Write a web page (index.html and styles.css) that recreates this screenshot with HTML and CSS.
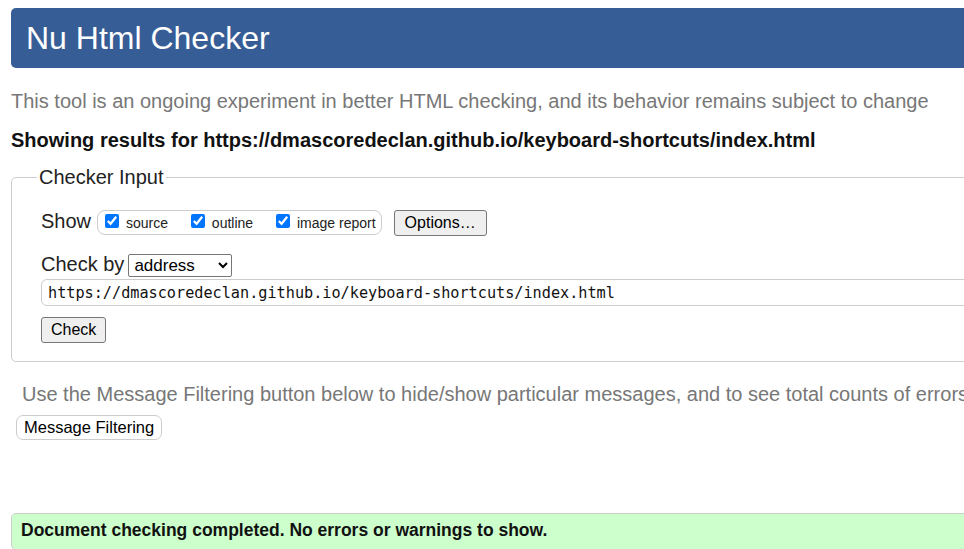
FILE: index.html
```html
<!DOCTYPE html>
<html lang="en">
<head>
<meta charset="utf-8">
<title>Nu Html Checker</title>
<link rel="stylesheet" href="styles.css">
</head>
<body>
<div class="page">
  <h1 class="title">Nu Html Checker</h1>
  <p class="intro">This tool is an ongoing experiment in better HTML checking, and its behavior remains subject to change</p>
  <p class="showing">Showing results for https://dmascoredeclan.github.io/keyboard-shortcuts/index.html</p>
  <fieldset class="checker">
    <legend class="legend">Checker Input</legend>
    <div class="row show-row">
      <span class="lbl">Show</span>
      <span class="group">
        <label class="opt"><input type="checkbox" checked> source</label>
        <label class="opt"><input type="checkbox" checked> outline</label>
        <label class="opt"><input type="checkbox" checked> image report</label>
      </span>
      <button class="btn options" type="button">Options…</button>
    </div>
    <div class="row by-row">
      <span class="lbl">Check by</span>
      <select class="sel"><option>address</option></select>
    </div>
    <input class="url" type="text" value="https://dmascoredeclan.github.io/keyboard-shortcuts/index.html">
    <div class="check-wrap"><button class="btn" type="button">Check</button></div>
  </fieldset>
  <p class="filter-note">Use the Message Filtering button below to hide/show particular messages, and to see total counts of errors and warnings.</p>
  <button class="filter-btn" type="button">Message Filtering</button>
  <div class="success">Document checking completed. No errors or warnings to show.</div>
</div>
</body>
</html>
```

FILE: styles.css
```css
html {
  overflow: hidden;
}
body {
  margin: 8px 0 0 11px;
  font-family: "Liberation Sans", Arial, sans-serif;
  color: #000;
  background: #fff;
}
.page {
  width: 1260px;
}
.title {
  margin: 0;
  height: 60px;
  line-height: 60px;
  padding-left: 15px;
  font-size: 32px;
  font-weight: normal;
  color: #fff;
  background: #365d95;
  border-radius: 5px 0 0 5px;
}
.intro {
  margin: 22px 0 0;
  font-size: 20px;
  line-height: 23px;
  color: #777;
  white-space: nowrap;
}
.showing {
  margin: 16px 0 0;
  font-size: 20px;
  line-height: 23px;
  font-weight: bold;
  color: #111;
  white-space: nowrap;
}
.checker {
  margin: 14px 0 0;
  padding: 0 0 18px 29px;
  border: 1px solid #ccc;
  border-radius: 5px;
  min-width: 0;
}
.legend {
  font-size: 20px;
  line-height: 23px;
  padding: 0 2px;
  margin-left: -4px;
  color: #222;
}
.row {
  display: flex;
  align-items: baseline;
}
.show-row {
  margin-top: 21px;
}
.lbl {
  font-size: 20px;
  line-height: 23px;
  color: #222;
}
.group {
  margin-left: 6px;
  padding: 0 5px 0 3px;
  border: 1px solid #ccc;
  border-radius: 8px;
  font-size: 14px;
  line-height: 22px;
  white-space: nowrap;
  display: flex;
  align-items: baseline;
  gap: 19px;
  color: #222;
}
.opt input {
  margin: 3px 3px 4px 4px;
  width: 14px;
  height: 14px;
  accent-color: #0075ff;
}
.btn {
  font-family: "Liberation Sans", Arial, sans-serif;
  font-size: 16px;
  line-height: 18px;
  padding: 3px 9px;
  color: #000;
  background: #efefef;
  border: 1px solid #767676;
  border-radius: 3px;
}
.options {
  margin-left: 12px;
  padding: 3px 10px;
}
.by-row {
  margin-top: 17px;
}
.sel {
  margin-left: 4px;
  width: 104px;
  height: 23px;
  font-family: "Liberation Sans", Arial, sans-serif;
  font-size: 17px;
  padding: 0 1px;
  border: 1px solid #767676;
  border-radius: 2px;
  background: #fff;
  color: #000;
}
.url {
  display: block;
  margin-top: 2px;
  width: 1130px;
  height: 27px;
  box-sizing: border-box;
  padding: 1px 6px 0;
  font-family: "DejaVu Sans Mono", "Liberation Mono", monospace;
  font-size: 15.2px;
  color: #111;
  border: 1px solid #ccc;
  border-radius: 6px;
  outline: none;
}
.check-wrap {
  margin-top: 11px;
}
.filter-note {
  margin: 21px 0 0;
  padding-left: 11px;
  font-size: 20px;
  line-height: 23px;
  color: #777;
  white-space: nowrap;
}
.filter-btn {
  display: block;
  margin: 9px 0 0 5px;
  height: 25px;
  padding: 0 7px;
  font-family: "Liberation Sans", Arial, sans-serif;
  font-size: 16.5px;
  line-height: 23px;
  color: #000;
  background: #fff;
  border: 1px solid #ccc;
  border-radius: 7px;
}
.success {
  margin-top: 73px;
  padding: 6px 9px 8px;
  font-size: 17.5px;
  line-height: 21px;
  font-weight: bold;
  color: #111;
  background: #ccffcc;
  border: 1px solid #ccc;
  border-radius: 5px;
  white-space: nowrap;
}
```
